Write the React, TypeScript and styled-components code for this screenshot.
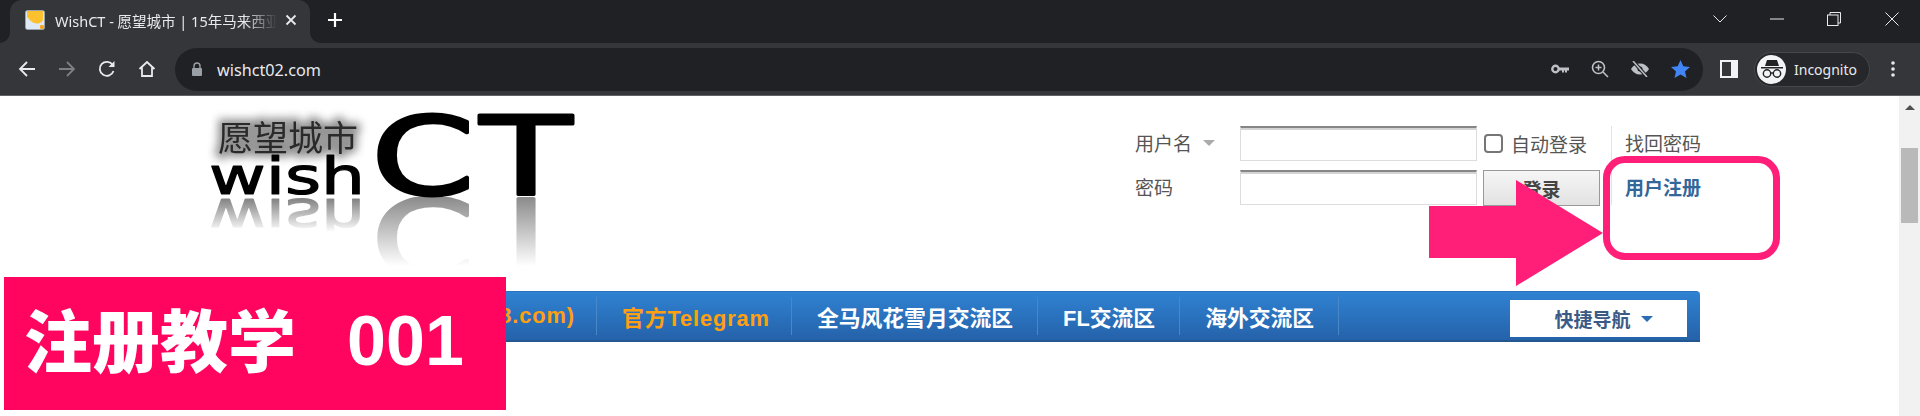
import React from 'react';
import styled, { createGlobalStyle } from 'styled-components';

const Global = createGlobalStyle`
  html, body { margin: 0; padding: 0; background: #fff; overflow: hidden; }
  * { box-sizing: border-box; }
`;

const UI = `"Noto Sans", "Noto Sans CJK SC", sans-serif`;
const CJK = `"Liberation Sans", "Noto Sans CJK SC", sans-serif`;

const Screen = styled.div`
  position: relative;
  width: 1920px;
  height: 416px;
  overflow: hidden;
  display: flex;
  flex-direction: column;
  background: #fff;
`;

const TabStrip = styled.div`
  height: 43px;
  flex: none;
  background: #202124;
  display: flex;
  align-items: flex-end;
  padding-left: 10px;
`;

const Tab = styled.div`
  position: relative;
  width: 300px;
  height: 43px;
  background: #35363a;
  border-radius: 12px 12px 0 0;
  display: flex;
  align-items: center;
  padding: 0 13px 3px 15px;
  color: #e8eaed;
  font: 14.5px ${UI};
  &::before, &::after {
    content: '';
    position: absolute;
    bottom: 0;
    width: 10px;
    height: 10px;
    background: radial-gradient(circle at var(--c) 0, #202124 9.5px, #35363a 10px);
  }
  &::before { left: -10px; --c: 0; }
  &::after { right: -10px; --c: 100%; }
`;

const TabTitle = styled.span`
  flex: 1;
  margin: 0 8px 0 10px;
  white-space: nowrap;
  overflow: hidden;
  -webkit-mask-image: linear-gradient(90deg, #000 85%, transparent);
  mask-image: linear-gradient(90deg, #000 85%, transparent);
`;

const NewTab = styled.div`
  margin: 0 0 3px 17px;
  height: 40px;
  display: flex;
  align-items: center;
`;

const WindowControls = styled.div`
  margin-left: auto;
  align-self: flex-start;
  display: flex;
  height: 37px;
  align-items: center;
`;

const WindowButton = styled.div<{ $w: number }>`
  width: ${p => p.$w}px;
  display: flex;
  justify-content: center;
`;

const Toolbar = styled.div`
  height: 53px;
  flex: none;
  background: #35363a;
  border-bottom: 1px solid #5f6165;
  display: flex;
  align-items: center;
  padding: 0 0 0 7px;
`;

const NavIcon = styled.div`
  width: 40px;
  height: 40px;
  display: flex;
  align-items: center;
  justify-content: center;
`;

const Omnibox = styled.div`
  width: 1528px;
  height: 43px;
  margin-left: 8px;
  border-radius: 22px;
  background: #202124;
  display: flex;
  align-items: center;
  padding: 0 3px 0 16px;
  color: #e8eaed;
  font: 16.2px ${UI};
`;

const Url = styled.span`
  margin-left: 14px;
  padding-top: 2px;
  flex: 1;
`;

const OmniIcon = styled.div`
  width: 40px;
  display: flex;
  justify-content: center;
`;

const PanelButton = styled.div`
  width: 51px;
  display: flex;
  justify-content: center;
`;

const ProfilePill = styled.div`
  width: 116px;
  height: 35px;
  border: 1px solid #45474b;
  border-radius: 18px;
  background: #26272a;
  display: flex;
  align-items: center;
  padding-left: 2px;
  gap: 8px;
  color: #e8eaed;
  font: 14px ${UI};
`;

const Avatar = styled.div`
  width: 29px;
  height: 29px;
  border-radius: 50%;
  background: #f1f3f4;
  display: flex;
  align-items: center;
  justify-content: center;
`;

const MenuButton = styled.div`
  width: 46px;
  display: flex;
  justify-content: center;
`;

const Viewport = styled.div`
  flex: 1;
  display: flex;
  min-height: 0;
`;

const Page = styled.div`
  flex: 1;
  padding-left: 200px;
`;

const Wrap = styled.div`
  width: 1500px;
`;

const Header = styled.div`
  height: 195px;
  display: flex;
  justify-content: space-between;
`;

const LoginGrid = styled.div`
  margin-top: 30px;
  display: grid;
  grid-template-columns: 105px 237px 134px 89px;
  grid-template-rows: 35px 35px;
  row-gap: 9px;
  height: 79px;
  color: #555;
  font: 19px ${CJK};
`;

const FieldLabel = styled.div`
  display: flex;
  align-items: center;
  gap: 11px;
  padding-bottom: 2px;
`;

const Caret = styled.i<{ $color: string; $size: number }>`
  width: 0;
  height: 0;
  border-left: ${p => p.$size}px solid transparent;
  border-right: ${p => p.$size}px solid transparent;
  border-top: ${p => p.$size}px solid ${p => p.$color};
`;

const TextInput = styled.div`
  border: 1px solid #dcdcdc;
  border-top: 2px solid #868686;
  box-shadow: inset 0 2px 0 #d4d4d4;
  background: #fff;
`;

const RememberCell = styled.div`
  display: flex;
  align-items: center;
  padding: 0 0 1px 7px;
  gap: 8px;
`;

const CheckBox = styled.span`
  width: 19px;
  height: 19px;
  border: 2px solid #767676;
  border-radius: 4px;
  background: #fff;
`;

const SubmitCell = styled.div`
  padding-left: 6px;
  padding-right: 11px;
`;

const SubmitButton = styled.div`
  height: 36px;
  border: 1px solid #999;
  background: linear-gradient(#f6f6f6, #e2e2e2);
  color: #444;
  font: bold 19px ${CJK};
  display: flex;
  align-items: center;
  justify-content: center;
`;

const SideLink = styled.div<{ $strong?: boolean }>`
  border-left: 1px solid #e3e3e3;
  padding: 0 0 2px 13px;
  display: flex;
  align-items: center;
  white-space: nowrap;
  color: ${p => (p.$strong ? '#336699' : '#555')};
  font-weight: ${p => (p.$strong ? 700 : 400)};
`;

const NavBar = styled.div`
  height: 51px;
  border-radius: 4px 4px 0 0;
  background: linear-gradient(#2f82d2, #2562aa);
  border-top: 1px solid #2a74bd;
  border-bottom: 2px solid #22588f;
  display: flex;
  align-items: stretch;
  padding: 3px 13px 3px 0;
  font: bold 21.8px ${CJK};
  color: #fff;
`;

const NavItem = styled.div<{ $accent?: boolean; $fill?: boolean }>`
  display: flex;
  align-items: center;
  justify-content: flex-end;
  flex: ${p => (p.$fill ? '0 0 397px' : 'none')};
  padding: 0 ${p => (p.$accent ? 21 : 24)}px 0 25px;
  white-space: nowrap;
  color: ${p => (p.$accent ? '#ffa010' : '#fff')};
  letter-spacing: ${p => (p.$accent ? '0.9px' : '0')};
  border-right: 1px solid #4a87c9;
  margin: 2px 0;
`;

const QuickNav = styled.div`
  margin-left: auto;
  width: 177px;
  margin-top: 5px;
  height: 37px;
  background: #fff;
  color: #3b5a85;
  font-size: 19px;
  display: flex;
  align-items: center;
  justify-content: center;
  gap: 10px;
  padding-left: 10px;
`;

const ScrollBar = styled.div`
  width: 21px;
  flex: none;
  background: #f1f1f1;
  display: flex;
  flex-direction: column;
  align-items: center;
  padding-top: 9px;
`;

const ScrollThumb = styled.div`
  width: 17px;
  height: 75px;
  margin-top: 38px;
  background: #b9b9b9;
`;

const ScrollUp = styled.i`
  width: 0;
  height: 0;
  border-left: 5px solid transparent;
  border-right: 5px solid transparent;
  border-bottom: 5px solid #505050;
`;

const Banner = styled.div`
  position: absolute;
  left: 4px;
  top: 277px;
  width: 502px;
  height: 133px;
  background: #ff0560;
  color: #fff;
  display: flex;
  align-items: flex-start;
  padding: 16px 0 0 20px;
  white-space: nowrap;
`;

const BannerTitle = styled.span`
  font: 900 68px/90px "Noto Sans CJK SC", sans-serif;
`;

const BannerCode = styled.span`
  font: bold 70px/90px "Liberation Sans", sans-serif;
  margin: 3px 0 0 51px;
`;

const CalloutBox = styled.div`
  position: absolute;
  left: 1603px;
  top: 156px;
  width: 177px;
  height: 104px;
  border: 7px solid #ff1f78;
  border-radius: 22px;
`;

const CalloutArrow = styled.svg`
  position: absolute;
  left: 1429px;
  top: 180px;
`;

const Stroke = { fill: 'none', stroke: '#e8eaed', strokeWidth: 1.8 } as const;

const Word = ({ x, size, width, bold, children, flip }: { x: number; size: number; width: number; bold: number; children: string; flip?: boolean }) => (
  <text
    transform={flip ? 'translate(0 201) scale(1 -1)' : undefined}
    x={x}
    y="98"
    fontFamily="DejaVu Sans"
    fontSize={size}
    textLength={width}
    lengthAdjust="spacingAndGlyphs"
    fill="#000"
    stroke="#000"
    strokeWidth={bold}
    strokeLinejoin="round"
  >
    {children}
  </text>
);

const Logo = () => (
  <svg width="390" height="195" viewBox="0 0 390 195" overflow="visible">
    <defs>
      <filter id="glow" x="-20%" y="-40%" width="140%" height="180%"><feGaussianBlur stdDeviation="4" /></filter>
      <filter id="soft"><feGaussianBlur stdDeviation="0.5" /></filter>
      <linearGradient id="fadeWish" x1="0" y1="102" x2="0" y2="136" gradientUnits="userSpaceOnUse">
        <stop offset="0" stopColor="#fff" stopOpacity="0.5" />
        <stop offset="1" stopColor="#fff" stopOpacity="0" />
      </linearGradient>
      <linearGradient id="fadeCT" x1="0" y1="102" x2="0" y2="170" gradientUnits="userSpaceOnUse">
        <stop offset="0" stopColor="#fff" stopOpacity="0.45" />
        <stop offset="1" stopColor="#fff" stopOpacity="0" />
      </linearGradient>
      <mask id="maskWish" maskUnits="userSpaceOnUse" x="0" y="101" width="390" height="94"><rect x="0" y="101" width="390" height="94" fill="url(#fadeWish)" /></mask>
      <mask id="maskCT" maskUnits="userSpaceOnUse" x="0" y="101" width="390" height="94"><rect x="0" y="101" width="390" height="94" fill="url(#fadeCT)" /></mask>
    </defs>
    <text x="18" y="55" fontFamily="Noto Sans CJK SC" fontSize="35" textLength="140" fill="#666" stroke="#666" strokeWidth="8" opacity="0.7" filter="url(#glow)">愿望城市</text>
    <text x="18" y="55" fontFamily="Noto Sans CJK SC" fontSize="35" textLength="140" fill="#2a2a2a" filter="url(#soft)">愿望城市</text>
    <Word x={9} size={52} width={156} bold={1.2}>wish</Word>
    <Word x={171} size={108} width={104} bold={3}>C</Word>
    <Word x={280} size={108} width={92} bold={3}>T</Word>
    <g mask="url(#maskWish)">
      <Word x={9} size={52} width={156} bold={1.2} flip>wish</Word>
    </g>
    <g mask="url(#maskCT)">
      <Word x={171} size={108} width={104} bold={3} flip>C</Word>
      <Word x={280} size={108} width={92} bold={3} flip>T</Word>
    </g>
  </svg>
);

export default function App() {
  return (
    <Screen>
      <Global />
      <TabStrip>
        <Tab>
          <svg width="20" height="20" viewBox="0 0 20 20">
            <rect x="0.5" y="0.5" width="19" height="19" rx="2" fill="#dfe9f5" stroke="#9aa4ad" />
            <path d="M2 1h16v8c0 3-3 4.5-6 4.5C7 13.5 4 9 2 7z" fill="#fdc02f" />
            <rect x="15" y="15" width="4" height="4" rx="1" fill="#f5a623" />
          </svg>
          <TabTitle>WishCT - 愿望城市 | 15年马来西亚</TabTitle>
          <svg width="12" height="12" viewBox="0 0 12 12"><path d="M1.5 1.5l9 9M10.5 1.5l-9 9" fill="none" stroke="#e8eaed" strokeWidth="1.8" /></svg>
        </Tab>
        <NewTab>
          <svg width="16" height="16" viewBox="0 0 16 16"><path d="M8 1v14M1 8h14" stroke="#fff" strokeWidth="2.2" /></svg>
        </NewTab>
        <WindowControls>
          <WindowButton $w={58}><svg width="14" height="8" viewBox="0 0 14 8"><path d="M.5.5L7 7 13.500.5" {...Stroke} strokeWidth={1} /></svg></WindowButton>
          <WindowButton $w={56}><svg width="14" height="2" viewBox="0 0 14 2"><path d="M0 1h14" {...Stroke} strokeWidth={1} /></svg></WindowButton>
          <WindowButton $w={58}><svg width="14" height="14" viewBox="0 0 14 14"><path d="M3 3V.5h10.500V11H11" {...Stroke} strokeWidth={1} /><rect x=".5" y="3" width="10.500" height="10.500" {...Stroke} strokeWidth={1} /></svg></WindowButton>
          <WindowButton $w={57}><svg width="14" height="14" viewBox="0 0 14 14"><path d="M.5.5l13 13M13.500.5l-13 13" {...Stroke} strokeWidth={1} /></svg></WindowButton>
        </WindowControls>
      </TabStrip>
      <Toolbar>
        <NavIcon><svg width="18" height="18" viewBox="0 0 18 18"><path d="M17 9H2M9 2L2 9l7 7" {...Stroke} /></svg></NavIcon>
        <NavIcon><svg width="18" height="18" viewBox="0 0 18 18"><path d="M1 9h15M9 2l7 7-7 7" {...Stroke} stroke="#7d7f82" /></svg></NavIcon>
        <NavIcon><svg width="18" height="18" viewBox="0 0 18 18"><path d="M15.500 11a7 7 0 1 1-.8-6" {...Stroke} /><path d="M16.500 1v6h-6z" fill="#e8eaed" /></svg></NavIcon>
        <NavIcon><svg width="18" height="18" viewBox="0 0 18 18"><path d="M1.500 9L9 2l7.500 7M4 7.500V16h10V7.500" {...Stroke} /></svg></NavIcon>
        <Omnibox>
          <svg width="12" height="14" viewBox="0 0 12 14"><path d="M3 6V4a3 3 0 0 1 6 0v2" fill="none" stroke="#9aa0a6" strokeWidth="1.400" /><rect x="1" y="6" width="10" height="8" rx="1" fill="#9aa0a6" /></svg>
          <Url>wishct02.com</Url>
          <OmniIcon><svg width="18" height="10" viewBox="0 0 18 10"><circle cx="4.500" cy="5" r="3.200" fill="none" stroke="#bdc1c6" strokeWidth="2.400" /><path d="M8 3.500h10v3h-2v2h-2v-2h-1v2h-2v-2H8z" fill="#bdc1c6" /></svg></OmniIcon>
          <OmniIcon><svg width="18" height="18" viewBox="0 0 18 18"><circle cx="7.500" cy="7.500" r="6" fill="none" stroke="#bdc1c6" strokeWidth="1.600" /><path d="M12 12l5 5M7.500 4.500v6M4.500 7.500h6" fill="none" stroke="#bdc1c6" strokeWidth="1.500" /></svg></OmniIcon>
          <OmniIcon><svg width="18" height="16" viewBox="0 0 18 16"><path d="M0 8c2-3.500 5-5.500 9-5.500s7 2 9 5.500c-2 3.500-5 5.500-9 5.500S2 11.500 0 8z" fill="#bdc1c6" /><circle cx="9" cy="8" r="2.500" fill="#202124" /><path d="M2 0l14 16" stroke="#202124" strokeWidth="3.500" /><path d="M2 0l14 16" stroke="#bdc1c6" strokeWidth="1.500" /></svg></OmniIcon>
          <OmniIcon><svg width="19" height="18" viewBox="0 0 19 18"><path d="M9.500 0l2.800 6.300 6.700.6-5 4.500 1.500 6.600-6-3.500-6 3.500 1.500-6.600-5-4.500 6.700-.6z" fill="#4285f4" /></svg></OmniIcon>
        </Omnibox>
        <PanelButton><svg width="18" height="18" viewBox="0 0 18 18"><rect width="18" height="18" fill="#f1f3f4" /><rect x="2" y="2" width="9" height="14" fill="#35363a" /></svg></PanelButton>
        <ProfilePill>
          <Avatar>
            <svg width="24" height="20" viewBox="0 0 24 20"><path d="M7 1h10l2 6H5zM1 8h22v1.500H1z" fill="#202124" /><circle cx="7" cy="14.500" r="3.700" fill="none" stroke="#202124" strokeWidth="1.400" /><circle cx="17" cy="14.500" r="3.700" fill="none" stroke="#202124" strokeWidth="1.400" /><path d="M10.500 14h3" stroke="#202124" strokeWidth="1.400" /></svg>
          </Avatar>
          Incognito
        </ProfilePill>
        <MenuButton><svg width="4" height="16" viewBox="0 0 4 16"><circle cx="2" cy="2" r="1.800" fill="#e8eaed" /><circle cx="2" cy="8" r="1.800" fill="#e8eaed" /><circle cx="2" cy="14" r="1.800" fill="#e8eaed" /></svg></MenuButton>
      </Toolbar>
      <Viewport>
        <Page>
          <Wrap>
            <Header>
              <Logo />
              <LoginGrid>
                <FieldLabel>用户名<Caret $color="#aaa" $size={6} /></FieldLabel>
                <TextInput />
                <RememberCell><CheckBox />自动登录</RememberCell>
                <SideLink>找回密码</SideLink>
                <FieldLabel>密码</FieldLabel>
                <TextInput />
                <SubmitCell><SubmitButton>登录</SubmitButton></SubmitCell>
                <SideLink $strong>用户注册</SideLink>
              </LoginGrid>
            </Header>
            <NavBar>
              <NavItem $accent $fill>(wishct8.com)</NavItem>
              <NavItem $accent>官方Telegram</NavItem>
              <NavItem>全马风花雪月交流区</NavItem>
              <NavItem>FL交流区</NavItem>
              <NavItem>海外交流区</NavItem>
              <QuickNav>快捷导航<Caret $color="#2a6db5" $size={6} /></QuickNav>
            </NavBar>
          </Wrap>
        </Page>
        <ScrollBar>
          <ScrollUp />
          <ScrollThumb />
        </ScrollBar>
      </Viewport>
      <CalloutArrow width="174" height="106" viewBox="0 0 174 106">
        <path d="M0 26h87V0l87 53-87 53V78H0z" fill="#ff1f78" />
      </CalloutArrow>
      <CalloutBox />
      <Banner>
        <BannerTitle>注册教学</BannerTitle>
        <BannerCode>001</BannerCode>
      </Banner>
    </Screen>
  );
}
